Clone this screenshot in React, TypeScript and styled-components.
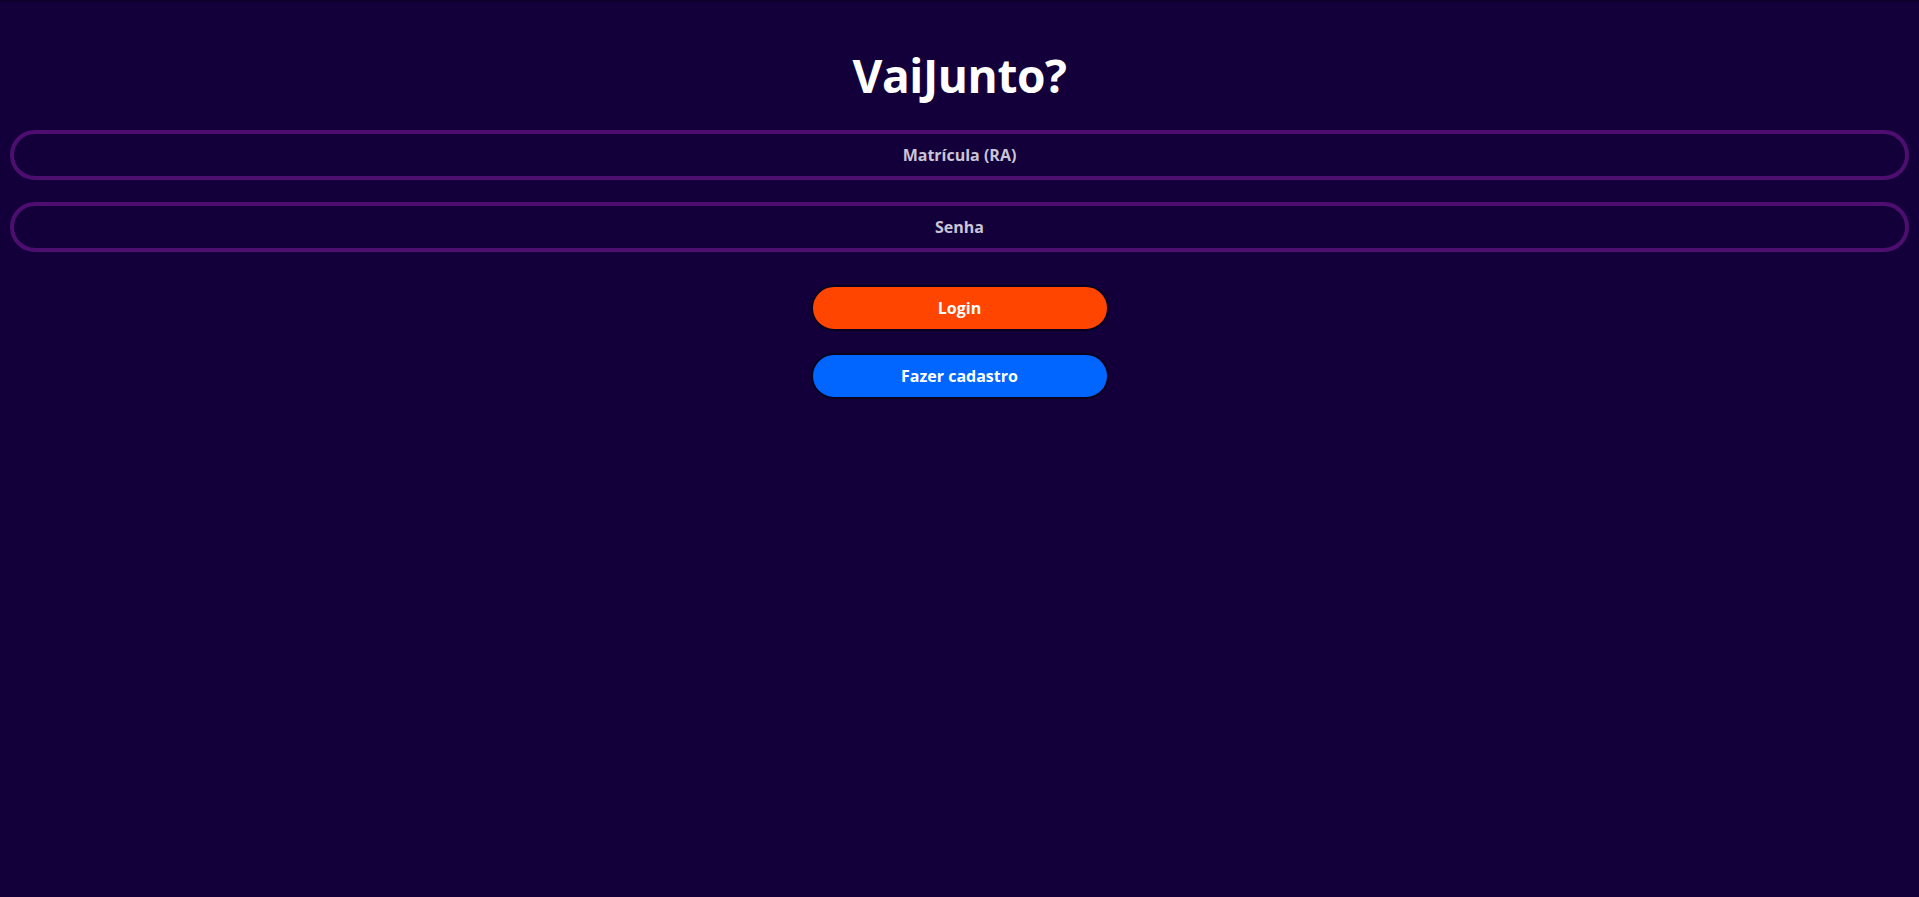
import React from "react";
import styled, { createGlobalStyle } from "styled-components";

const Global = createGlobalStyle`
  html, body {
    margin: 0;
    padding: 0;
    background: #13003b;
  }
  body {
    font-family: "Open Sans", "Noto Sans", sans-serif;
    min-height: 897px;
  }
  * { box-sizing: border-box; }
`;

const Page = styled.main`
  min-height: 897px;
  background: #13003b;
  border-top: 2px solid #0e002c;
  display: flex;
  flex-direction: column;
  align-items: center;
  padding: 0 10px;
`;

const Title = styled.h1`
  margin: 46px 0 28px;
  font-size: 46px;
  line-height: 54px;
  font-weight: 700;
  color: #ffffff;
  letter-spacing: -0.4px;
`;

const Field = styled.input`
  width: 100%;
  height: 50px;
  margin-bottom: 22px;
  border: 4px solid #4d0e70;
  border-radius: 25px;
  background: transparent;
  color: #ffffff;
  text-align: center;
  font-family: "Open Sans", sans-serif;
  font-size: 16px;
  font-weight: 700;
  outline: none;
  &::placeholder {
    color: #cbc4d6;
    opacity: 1;
  }
`;

const Button = styled.button<{ $variant: "login" | "cadastro" }>`
  width: 298px;
  height: 46px;
  margin-top: ${(p) => (p.$variant === "login" ? "11px" : "22px")};
  border: 2px solid #0a0020;
  border-radius: 23px;
  background: ${(p) => (p.$variant === "login" ? "#ff4500" : "#0066ff")};
  color: #ffffff;
  font-family: "Open Sans", sans-serif;
  font-size: 16px;
  font-weight: 700;
  cursor: pointer;
`;

export default function App() {
  return (
    <>
      <Global />
      <Page>
        <Title>VaiJunto?</Title>
        <Field placeholder="Matrícula (RA)" />
        <Field type="password" placeholder="Senha" />
        <Button $variant="login">Login</Button>
        <Button $variant="cadastro">Fazer cadastro</Button>
      </Page>
    </>
  );
}
